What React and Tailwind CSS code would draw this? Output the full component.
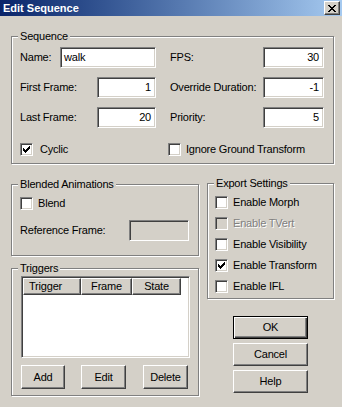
import React from "react";

const sunken =
  "border border-t-[#808080] border-l-[#808080] border-b-white border-r-white shadow-[inset_1px_1px_0_#404040,inset_-1px_-1px_0_#D4D0C8]";
const raised =
  "border border-t-white border-l-white border-b-[#404040] border-r-[#404040] shadow-[inset_-1px_-1px_0_#808080]";

function Check() {
  return (
    <svg width="7" height="7" viewBox="0 0 7 7" shapeRendering="crispEdges">
      <path
        fill="#000"
        d="M6 0h1v1h-1zM5 1h2v1h-2zM0 2h1v1h-1zM4 2h3v1h-3zM0 3h2v1h-2zM3 3h3v1h-3zM0 4h5v1h-5zM1 5h3v1h-3zM2 6h1v1h-1z"
      />
    </svg>
  );
}

function Checkbox({ label, checked, disabled, gap = "gap-[5px]" }) {
  return (
    <div className={`flex items-center h-[13px] ${gap}`}>
      <div
        className={`w-[13px] h-[13px] shrink-0 flex items-center justify-center ${sunken} ${
          disabled ? "bg-[#D4D0C8]" : "bg-white"
        }`}
      >
        {checked && <Check />}
      </div>
      <span
        className={
          disabled ? "text-[#808080] [text-shadow:1px_1px_0_#fff]" : ""
        }
      >
        {label}
      </span>
    </div>
  );
}

function Field({ value, width, left, disabled }) {
  return (
    <div
      className={`h-[21px] ${width} ${sunken} flex items-center ${
        left ? "justify-start pl-[3px]" : "justify-end pr-[4px]"
      } ${disabled ? "bg-[#D4D0C8]" : "bg-white"}`}
    >
      {value}
    </div>
  );
}

function Row({ label, children }) {
  return (
    <div className="flex items-center justify-between h-[21px]">
      <span>{label}</span>
      {children}
    </div>
  );
}

function Group({ title, className, children }) {
  return (
    <div
      className={`relative border border-[#808080] shadow-[inset_1px_1px_0_#fff,1px_1px_0_#fff] ${className}`}
    >
      <span className="absolute -top-[7px] left-[6px] bg-[#D4D0C8] px-[2px] leading-[13px]">
        {title}
      </span>
      {children}
    </div>
  );
}

function Button({ children, className, isDefault }) {
  return (
    <div
      className={`flex items-center justify-center bg-[#D4D0C8] ${
        isDefault
          ? "border border-black shadow-[inset_1px_1px_0_#fff,inset_-1px_-1px_0_#404040,inset_-2px_-2px_0_#808080]"
          : raised
      } ${className}`}
    >
      {children}
    </div>
  );
}

export default function App() {
  return (
    <div className="w-[342px] h-[407px] bg-[#D4D0C8] overflow-hidden text-[11px] leading-[13px] tracking-[-0.2px] text-black [font-family:'Liberation_Sans',Arial,sans-serif]">
      {/* Title bar */}
      <div className="h-[16px] flex items-center justify-between bg-linear-to-r from-[#0A246A] to-[#A6CAF0]">
        <span className="pl-[3px] font-bold text-white tracking-normal">
          Edit Sequence
        </span>
        <div
          className={`w-[16px] h-[14px] mr-[2px] bg-[#D4D0C8] flex items-center justify-center ${raised}`}
        >
          <svg width="8" height="7" viewBox="0 0 8 7" shapeRendering="crispEdges">
            <path
              fill="#000"
              d="M0 0h2v1h-2zM6 0h2v1h-2zM1 1h2v1h-2zM5 1h2v1h-2zM2 2h4v1h-4zM3 3h2v1h-2zM2 4h4v1h-4zM1 5h2v1h-2zM5 5h2v1h-2zM0 6h2v1h-2zM6 6h2v1h-2z"
            />
          </svg>
        </div>
      </div>

      <div className="pl-[11px] pr-[8px] pt-[20px]">
        {/* Sequence */}
        <Group title="Sequence" className="h-[128px] pl-[8px] pr-[9px] pt-[10px]">
          <div className="grid grid-cols-[136px_1fr] gap-x-[14px]">
            <div className="flex flex-col gap-y-[9px]">
              <Row label="Name:">
                <Field value="walk" width="w-[96px]" left />
              </Row>
              <Row label="First Frame:">
                <Field value="1" width="w-[59px]" />
              </Row>
              <Row label="Last Frame:">
                <Field value="20" width="w-[59px]" />
              </Row>
            </div>
            <div className="flex flex-col gap-y-[9px]">
              <Row label="FPS:">
                <Field value="30" width="w-[61px]" />
              </Row>
              <Row label="Override Duration:">
                <Field value="-1" width="w-[61px]" />
              </Row>
              <Row label="Priority:">
                <Field value="5" width="w-[61px]" />
              </Row>
            </div>
            <div className="mt-[15px]">
              <Checkbox label="Cyclic" checked gap="gap-[7px]" />
            </div>
            <div className="mt-[15px] -ml-[2px]">
              <Checkbox label="Ignore Ground Transform" />
            </div>
          </div>
        </Group>

        <div className="flex gap-[8px] mt-[20px]">
          {/* Left column */}
          <div className="w-[188px] flex flex-col">
            <Group title="Blended Animations" className="h-[72px] pl-[8px] pr-[9px] pt-[12px]">
              <Checkbox label="Blend" />
              <div className="mt-[10px] flex items-center justify-between">
                <span>Reference Frame:</span>
                <Field value="" width="w-[60px]" disabled />
              </div>
            </Group>

            <Group title="Triggers" className="mt-[12px] h-[128px] pl-[9px] pt-[7px]">
              <div className={`w-[169px] h-[82px] bg-white ${sunken} p-[1px]`}>
                <div className="flex h-[17px]">
                  <div className={`w-[58px] bg-[#D4D0C8] ${raised} flex items-center pl-[5px]`}>
                    Trigger
                  </div>
                  <div className={`w-[51px] bg-[#D4D0C8] ${raised} flex items-center justify-center`}>
                    Frame
                  </div>
                  <div className={`w-[49px] bg-[#D4D0C8] ${raised} flex items-center justify-center`}>
                    State
                  </div>
                </div>
              </div>
              <div className="flex mt-[7px]">
                <Button className="w-[44px] h-[24px]">Add</Button>
                <Button className="w-[45px] h-[24px] ml-[16px]">Edit</Button>
                <Button className="w-[45px] h-[24px] ml-[17px]">Delete</Button>
              </div>
            </Group>
          </div>

          {/* Right column */}
          <div className="w-[127px] flex flex-col -mt-[1px]">
            <Group title="Export Settings" className="h-[116px] pl-[7px] pt-[12px]">
              <div className="flex flex-col gap-[8px]">
                <Checkbox label="Enable Morph" />
                <Checkbox label="Enable TVert" disabled />
                <Checkbox label="Enable Visibility" />
                <Checkbox label="Enable Transform" checked />
                <Checkbox label="Enable IFL" />
              </div>
            </Group>
            <div className="mt-[17px] flex flex-col items-center gap-[4px]">
              <Button className="w-[75px] h-[23px]" isDefault>
                OK
              </Button>
              <Button className="w-[75px] h-[23px]">Cancel</Button>
              <Button className="w-[75px] h-[23px]">Help</Button>
            </div>
          </div>
        </div>
      </div>
    </div>
  );
}
